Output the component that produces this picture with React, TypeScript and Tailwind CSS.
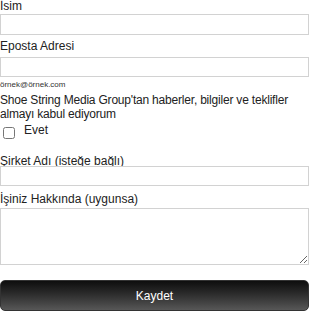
export default function App() {
  return (
    <div className="w-[310px] h-[318px] overflow-hidden bg-white text-[12px] leading-[14px] text-[#222]" style={{ fontFamily: '"Liberation Sans", Arial, sans-serif' }}>
      <form className="flex flex-col w-[309px]" onSubmit={(e) => e.preventDefault()}>
        {/* İsim */}
        <label className="block -mt-[1px] h-[15px]">İsim</label>
        <input type="text" className="block w-full h-[21px] border border-[#d2d2d2] bg-white outline-none" />

        {/* Eposta */}
        <label className="block mt-[4px] h-[18px]">Eposta Adresi</label>
        <input type="email" className="block w-full h-[20px] border border-[#d2d2d2] bg-white outline-none" />
        <p className="mt-[3px] h-[13px] text-[8px] leading-[9px] text-[#333]">örnek@örnek.com</p>

        {/* bülten onayı */}
        <p className="tracking-[-0.2px]">Shoe String Media Group'tan haberler, bilgiler ve teklifler almayı kabul ediyorum</p>
        <label className="flex items-start h-[33px]">
          <input type="checkbox" className="m-0 mt-[6px] ml-[3px] w-[12px] h-[12px]" />
          <span className="ml-[9px] mt-[2px]">Evet</span>
        </label>

        {/* Şirket */}
        <label className="block h-[12px]">Şirket Adı (isteğe bağlı)</label>
        <input type="text" className="block w-full h-[20px] border border-[#d2d2d2] bg-white outline-none" />

        {/* İşiniz */}
        <label className="block mt-[6px] h-[16px]">İşiniz Hakkında (uygunsa)</label>
        <textarea className="block w-full h-[57px] border border-[#d2d2d2] bg-white outline-none" />

        <button
          type="submit"
          className="mt-[15px] h-[31px] w-full rounded-[5px] border border-[#333] bg-gradient-to-b from-[#0e0e0e] to-[#575757] text-white text-[12px]"
        >
          Kaydet
        </button>
      </form>
    </div>
  )
}
